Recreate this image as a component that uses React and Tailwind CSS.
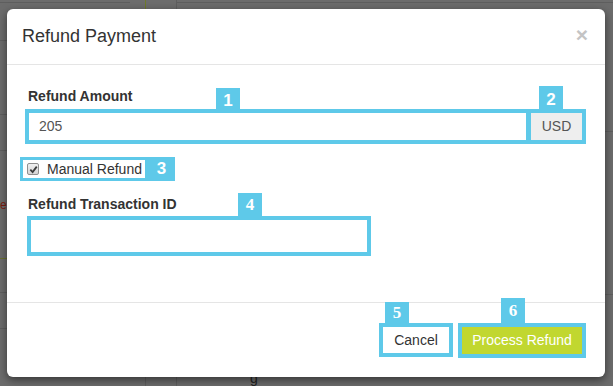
import React from 'react';

const CYAN = 'bg-[#5ec9e9]';

const Badge = ({ n, className = '', serif = false }) => (
  <div
    className={`absolute ${CYAN} w-[24px] flex items-center justify-center text-white font-bold text-[17px] leading-none ${
      serif ? "font-['Liberation_Serif',serif]" : "font-['Liberation_Sans',Arial,sans-serif]"
    } ${className}`}
  >
    {n}
  </div>
);

const FakeCheckbox = () => (
  <span className="w-[12px] h-[12px] rounded-[2px] border border-[#8f8f8f] bg-gradient-to-b from-[#f0f0f0] to-[#d4d4d4] flex items-center justify-center">
    <svg width="9" height="9" viewBox="0 0 10 10">
      <path d="M1.5 5.2 L4 7.8 L8.6 1.8" fill="none" stroke="#3b3b3b" strokeWidth="2" />
    </svg>
  </span>
);

// dimmed page lines behind the backdrop
const PageBehind = () => (
  <svg className="absolute inset-0" width="613" height="386">
    <g stroke="#5e5e5e" strokeWidth="1">
      <line x1="0" y1="2.5" x2="130" y2="2.5" />
      <line x1="177" y1="2.5" x2="613" y2="2.5" />
      <line x1="176.5" y1="0" x2="176.5" y2="9" />
      <line x1="145.5" y1="377" x2="145.5" y2="386" />
      <line x1="176.5" y1="377" x2="176.5" y2="386" />
      <line x1="0" y1="40.5" x2="7" y2="40.5" />
      <line x1="0" y1="114.5" x2="7" y2="114.5" />
      <line x1="0" y1="150.5" x2="7" y2="150.5" />
      <line x1="0" y1="292.5" x2="7" y2="292.5" />
      <line x1="0" y1="328.5" x2="7" y2="328.5" />
      <line x1="605" y1="131.5" x2="613" y2="131.5" />
      <line x1="605" y1="294.5" x2="613" y2="294.5" />
    </g>
    <line x1="145.5" y1="0" x2="145.5" y2="9" stroke="#6f7a2a" />
    <line x1="0" y1="258.5" x2="7" y2="258.5" stroke="#6a7030" />
  </svg>
);

export default function App() {
  return (
    <div className="relative w-[613px] h-[386px] overflow-hidden bg-[#6c6c6c] font-['Liberation_Sans',Arial,sans-serif]">
      <PageBehind />
      <div className="absolute left-0 top-[196px] text-[12px] text-[#7a1c10]">e</div>
      <div className="absolute left-[250px] top-[368px] text-[14px] text-[#222]">g</div>

      {/* modal */}
      <div className="absolute left-[7px] top-[9px] w-[598px] h-[368px] bg-white rounded-[6px] shadow-[0_3px_9px_rgba(0,0,0,0.5)] flex flex-col">
        <div className="h-[56px] px-[15px] flex items-center justify-between border-b border-[#e5e5e5]">
          <span className="text-[18px] text-[#333] mt-[-1px]">Refund Payment</span>
          <span className="text-[21px] font-bold text-[#c4c4c4] leading-none mr-[2px] mt-[-4px]">×</span>
        </div>

        <div className="h-[237px] pl-[18px] pt-[21px] flex flex-col items-start">
          <div className="h-[20px] leading-[20px] pl-[3px] text-[14px] font-bold text-[#333]">Refund Amount</div>
          <div className="relative mt-[3px] w-[561px] h-[35px] border-4 border-[#5ec9e9] flex">
            <div className="flex-1 bg-white flex items-center pl-[10px] text-[14px] text-[#555]">205</div>
            <div className={`w-[5px] ${CYAN}`} />
            <div className="w-[51px] bg-[#eeeeee] flex items-center justify-center text-[14px] text-[#555]">USD</div>
            <Badge n="1" className="left-[187px] top-[-25px] h-[25px]" />
            <Badge n="2" className="left-[510px] top-[-27px] h-[27px]" />
          </div>

          <div className="mt-[13px] ml-[-5px] flex">
            <div className="w-[128px] h-[24px] border-[3px] border-[#5ec9e9] bg-white flex items-center pl-[4px] gap-[8px]">
              <FakeCheckbox />
              <span className="text-[14px] text-[#333]">Manual Refund</span>
            </div>
            <div className={`w-[27px] h-[24px] ${CYAN} flex items-center justify-center text-white font-bold text-[17px]`}>3</div>
          </div>

          <div className="mt-[13px] h-[20px] leading-[20px] pl-[3px] text-[14px] font-bold text-[#333]">Refund Transaction ID</div>
          <div className="relative mt-[2px] ml-[2px] w-[344px] h-[40px] border-4 border-[#5ec9e9] bg-white">
            <Badge n="4" serif className="left-[207px] top-[-27px] h-[23px]" />
          </div>
        </div>

        <div className="flex-1 border-t border-[#e5e5e5] flex justify-end items-start pt-[20px] pr-[19px] gap-[5px]">
          <div className="relative w-[74px] h-[34px] border-4 border-[#5ec9e9] bg-white flex items-center justify-center text-[14px] text-[#333]">
            Cancel
            <Badge n="5" serif className="left-[2px] top-[-25px] h-[21px]" />
          </div>
          <div className="relative w-[128px] h-[35px] border-4 border-[#5ec9e9] bg-[#c1d72f] flex items-center justify-center text-[14px] text-white">
            Process Refund
            <Badge n="6" serif className="left-[39px] top-[-29px] h-[25px]" />
          </div>
        </div>
      </div>
    </div>
  );
}
